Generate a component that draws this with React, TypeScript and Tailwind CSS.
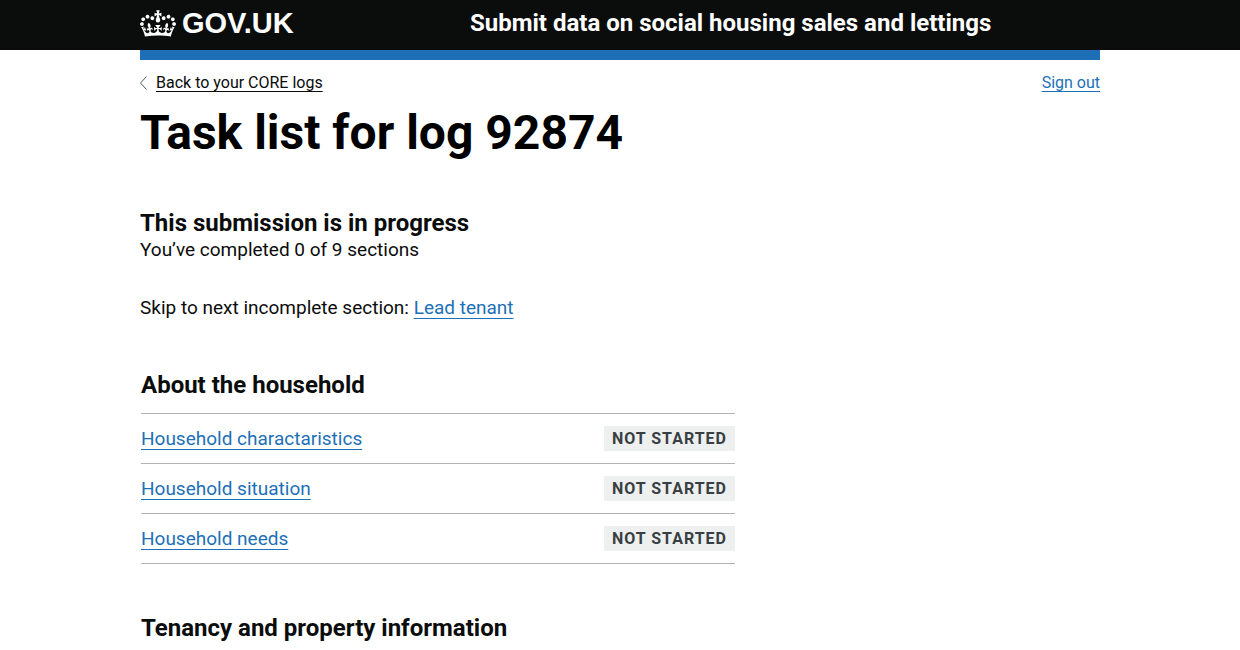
const sections = [
  { name: 'Household charactaristics', status: 'Not started' },
  { name: 'Household situation', status: 'Not started' },
  { name: 'Household needs', status: 'Not started' },
];

const linkStyle = 'text-[#1d70b8] underline decoration-1 underline-offset-4 [text-decoration-skip-ink:none]';

function Crown() {
  return (
    <svg aria-hidden="true" viewBox="0 0 132 97" className="h-[27px] w-9 shrink-0 fill-current">
      <path d="M25 30.2c3.5 1.5 7.7-.2 9.1-3.7 1.5-3.6-.2-7.8-3.9-9.2-3.6-1.4-7.6.3-9.1 3.9-1.4 3.5.3 7.5 3.9 9zM9 39.5c3.6 1.5 7.8-.2 9.2-3.7 1.5-3.6-.2-7.8-3.9-9.1-3.6-1.5-7.6.2-9.1 3.8-1.4 3.5.3 7.5 3.8 9zM4.4 57.2c3.5 1.5 7.7-.2 9.1-3.8 1.5-3.6-.2-7.7-3.9-9.1-3.5-1.5-7.6.3-9.1 3.8-1.4 3.5.3 7.6 3.9 9.1zm38.3-21.4c3.5 1.5 7.7-.2 9.1-3.8 1.5-3.6-.2-7.7-3.9-9.1-3.6-1.5-7.6.3-9.1 3.8-1.3 3.6.4 7.7 3.9 9.1zm64.4-5.6c-3.6 1.5-7.8-.2-9.1-3.7-1.5-3.6.2-7.8 3.8-9.2 3.6-1.4 7.7.3 9.2 3.9 1.3 3.5-.4 7.5-3.9 9zm15.9 9.3c-3.6 1.5-7.7-.2-9.1-3.7-1.5-3.6.2-7.8 3.7-9.1 3.6-1.5 7.7.2 9.2 3.8 1.5 3.5-.3 7.5-3.8 9zm4.7 17.7c-3.6 1.5-7.8-.2-9.2-3.8-1.5-3.6.2-7.7 3.9-9.1 3.6-1.5 7.7.3 9.2 3.8 1.3 3.5-.4 7.6-3.9 9.1zM89.3 35.8c-3.6 1.5-7.8-.2-9.2-3.8-1.4-3.6.2-7.7 3.9-9.1 3.6-1.5 7.7.3 9.2 3.8 1.4 3.6-.3 7.7-3.9 9.1zM69.7 17.7l8.9 4.7V9.3l-8.9 2.8c-.2-.3-.5-.6-.9-.9L72.4 0H59.6l3.5 11.2c-.3.3-.6.5-.9.9l-8.8-2.8v13.1l8.8-4.7c.3.3.6.7.9.9l-5 15.4v.1c-.2.8-.4 1.6-.4 2.4 0 4.1 3.1 7.5 7 8.1h.2c.3 0 .7.1 1 .1.4 0 .7 0 1-.1h.2c4-.6 7.1-4.1 7.1-8.1 0-.8-.1-1.7-.4-2.4V34l-5.1-15.4c.4-.2.7-.6 1-.9zM66 92.8c16.9 0 32.8 1.1 47.1 3.2 4-16.9 8.9-26.7 14-33.5l-9.6-3.4c1 4.9 1.1 7.2 0 10.2-1.5-1.4-3-4.3-4.2-8.7L108.6 76c2.8-2 5-3.2 7.5-3.3-4.4 9.4-10 11.9-13.6 11.2-4.3-.8-6.3-4.6-5.6-7.9 1-4.7 5.7-5.9 8-.5 4.3-8.7-3-11.4-7.6-8.8 7.1-7.2 7.9-13.5 2.1-21.1-8 6.1-8.1 12.3-4.5 20.8-4.7-5.4-12.1-2.5-9.5 6.2 3.4-5.2 7.9-2 7.2 3.1-.6 4.3-6.4 7.8-13.5 7.2-10.3-.9-10.9-8-11.2-13.8 2.5-.5 7.1 1.8 11 7.3L80.2 60c-4.1 4.4-8 5.3-12.3 5.4 1.4-4.4 8-11.6 8-11.6H55.5s6.4 7.2 7.9 11.6c-4.2-.1-8-1-12.3-5.4l1.4 16.4c3.9-5.5 8.5-7.7 10.9-7.3-.3 5.8-.9 12.8-11.1 13.8-7.2.6-12.9-2.9-13.5-7.2-.7-5 3.8-8.3 7.1-3.1 2.7-8.7-4.6-11.6-9.4-6.2 3.7-8.5 3.6-14.7-4.6-20.8-5.8 7.6-5 13.9 2.2 21.1-4.7-2.6-11.9.1-7.7 8.8 2.3-5.5 7.1-4.2 8.1.5.7 3.3-1.3 7.1-5.7 7.9-3.5.7-9-1.8-13.5-11.2 2.5.1 4.7 1.3 7.5 3.3l-4.7-15.4c-1.2 4.4-2.7 7.2-4.3 8.7-1.1-3-.9-5.3 0-10.2l-9.5 3.4c5 6.9 9.9 16.7 14 33.5 14.8-2.1 30.8-3.2 47.7-3.2z" />
    </svg>
  );
}

export default function App() {
  return (
    <div className="min-h-screen bg-white font-[Roboto,sans-serif] text-[19px] leading-6 text-[#0b0c0c]">
      <header className="bg-[#0b0c0c] text-white">
        <div className="mx-auto flex h-[50px] max-w-[960px] items-center pb-1">
          <a href="#home" className="flex w-[330px] shrink-0 items-center gap-[6px] text-[29px] font-bold leading-none">
            <Crown />
            <span className="font-['Liberation_Sans',sans-serif]">GOV.UK</span>
          </a>
          <a href="#service" className="whitespace-nowrap text-2xl font-bold">
            Submit data on social housing sales and lettings
          </a>
        </div>
      </header>
      <div className="mx-auto max-w-[960px]">
        <div className="h-[10px] bg-[#1d70b8]" />
        <nav className="flex items-start justify-between pt-[14px] text-base leading-[18px]">
          <a href="#logs" className="flex items-center gap-[9px]">
            <svg aria-hidden="true" viewBox="0 0 7 14" className="h-[14px] w-[7px] fill-none stroke-[#505a5f]">
              <path d="M6.5.5.5 7l6 6.5" />
            </svg>
            <span className="underline decoration-1 underline-offset-[3px] [text-decoration-skip-ink:none]">
              Back to your CORE logs
            </span>
          </a>
          <a href="#signout" className="text-[#1d70b8] underline decoration-1 underline-offset-[3px] [text-decoration-skip-ink:none]">
            Sign out
          </a>
        </nav>
        <main>
          <h1 className="pt-4 text-5xl font-bold leading-[50px] text-black">Task list for log 92874</h1>
          <h2 className="mt-[50px] text-2xl font-bold leading-[30px]">This submission is in progress</h2>
          <p>You’ve completed 0 of 9 sections</p>
          <p className="mt-[34px]">
            Skip to next incomplete section: <a href="#lead-tenant" className={linkStyle}>Lead tenant</a>
          </p>
          <section className="mt-[50px] max-w-[595px] pl-px">
            <h2 className="text-2xl font-bold leading-[30px]">About the household</h2>
            <ul className="mt-[13px] border-t border-[#b1b4b6]">
              {sections.map((section) => (
                <li key={section.name} className="flex h-[50px] items-center justify-between border-b border-[#b1b4b6]">
                  <a href="#section" className={linkStyle}>{section.name}</a>
                  <strong className="bg-[#eeefef] px-2 text-base font-bold uppercase leading-[25px] tracking-[1px] text-[#383f43]">
                    {section.status}
                  </strong>
                </li>
              ))}
            </ul>
          </section>
          <section className="mt-[49px] pl-px">
            <h2 className="text-2xl font-bold leading-[30px]">Tenancy and property information</h2>
          </section>
        </main>
      </div>
    </div>
  );
}
